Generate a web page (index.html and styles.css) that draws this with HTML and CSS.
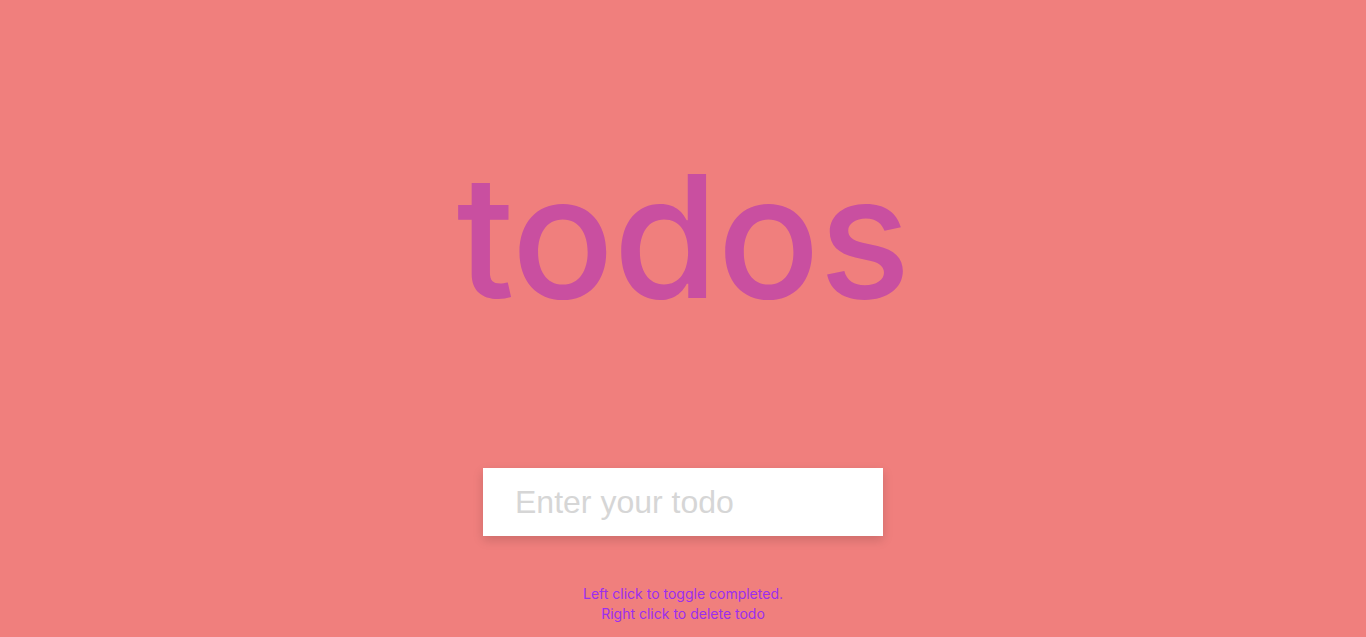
FILE: index.html
```html
<!DOCTYPE html>
<html lang="en">
<head>
<meta charset="utf-8">
<title>todos</title>
<link rel="stylesheet" href="styles.css">
</head>
<body>
<main class="app">
  <h1 class="title">todos</h1>
  <form class="todo-form">
    <input class="todo-input" type="text" placeholder="Enter your todo">
  </form>
  <p class="hint">Left click to toggle completed.<br>Right click to delete todo</p>
</main>
</body>
</html>
```
FILE: styles.css
```css
html, body {
  margin: 0;
  padding: 0;
}
body {
  background: #f07f7d;
  font-family: "Inter", "Noto Sans", sans-serif;
  height: 637px;
  overflow: hidden;
}
.app {
  display: flex;
  flex-direction: column;
  align-items: center;
}
.title {
  margin: 151px 0 0;
  font-size: 170px;
  line-height: 1;
  font-weight: 500;
  letter-spacing: -1px;
  color: #c94fa0;
  height: 200px;
}
.todo-form {
  margin-top: 117px;
}
.todo-input {
  box-sizing: border-box;
  width: 400px;
  height: 68px;
  border: none;
  outline: none;
  padding: 0 32px;
  font-family: "Liberation Sans", Arial, sans-serif;
  font-size: 32px;
  color: #444;
  background: #fff;
  box-shadow: 0 4px 10px rgba(0, 0, 0, 0.15);
  display: block;
}
.todo-input::placeholder {
  color: #d6d6d6;
}
.hint {
  margin: 48px 0 0;
  font-size: 14px;
  line-height: 20px;
  text-align: center;
  color: #9b2ef0;
}
```
